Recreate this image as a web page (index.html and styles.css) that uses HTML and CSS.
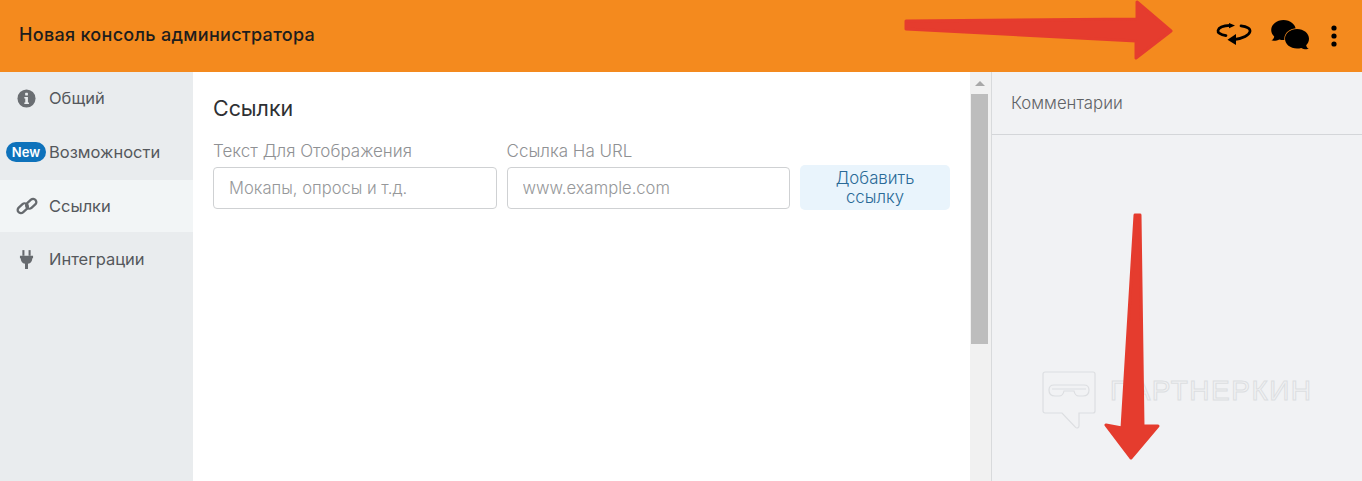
FILE: index.html
```html
<!DOCTYPE html>
<html lang="ru">
<head>
<meta charset="utf-8">
<title>Новая консоль администратора</title>
<link rel="stylesheet" href="styles.css">
</head>
<body>
<div class="app">
  <header class="topbar">
    <h1 class="title">Новая консоль администратора</h1>
    <div class="actions">
      <svg class="ic-sync" viewBox="0 0 36 22" width="36" height="22"><g fill="none" stroke="#000" stroke-width="2.7" stroke-linecap="round"><path d="M10 12.6 C4 11.6 1.5 9.5 2 7.5 C2.8 4.5 8 2.6 14 2.4"/><path d="M25 2.8 C31 3.5 34.6 5.6 34 8.6 C33.4 12 27 15.6 18 16.6"/></g><path d="M13 0 L19 2.6 L13 5.2Z"/><path d="M20 11 L11.5 16.8 L20 22Z"/></svg>
      <svg class="ic-chat" viewBox="0 0 38 30" width="38" height="30"><path d="M12.5 0 C19.3 0 24.8 4.5 24.8 10 C24.8 15.5 19.3 20 12.5 20 C11 20 9.7 19.8 8.4 19.4 C6.4 20.6 3.6 21 .4 20.6 C2 19.4 3 18 3.2 16.4 C1.2 14.6 .2 12.4 .2 10 C.2 4.5 5.7 0 12.5 0Z"/><path class="chat-back" d="M26 9 C32.7 9 38 13.4 38 18.8 C38 21.2 37 23.4 35.2 25.2 C35.4 26.6 36.2 27.8 37.8 29 C34.8 29.4 32 29 30.2 27.9 C28.9 28.3 27.5 28.5 26 28.5 C19.3 28.5 14 24.2 14 18.8 C14 13.4 19.3 9 26 9Z"/></svg>
      <svg class="ic-more" viewBox="0 0 8 22" width="8" height="22"><circle cx="4" cy="3" r="2.6"/><circle cx="4" cy="11" r="2.6"/><circle cx="4" cy="19" r="2.6"/></svg>
    </div>
  </header>
  <div class="body">
    <nav class="sidebar">
      <a class="nav-item">
        <span class="nav-ic"><svg viewBox="0 0 20 20" width="19" height="19"><circle cx="10" cy="10" r="9.5" fill="#6a6e72"/><rect x="8.6" y="4" width="2.9" height="2.9" rx=".6" fill="#e9ecee"/><path d="M7.7 8.3h3.8v6h1.1v1.6H7.7v-1.6h1v-4.3h-1z" fill="#e9ecee"/></svg></span>
        <span>Общий</span>
      </a>
      <a class="nav-item">
        <span class="badge">New</span>
        <span>Возможности</span>
      </a>
      <a class="nav-item active">
        <span class="nav-ic"><svg viewBox="0 0 22 18" width="22" height="18" fill="none" stroke="#666a6e" stroke-width="2.3"><rect x="1" y="8" width="11.5" height="6.4" rx="3.2" transform="rotate(-42 6.8 11.2)"/><rect x="9.5" y="3.6" width="11.5" height="6.4" rx="3.2" transform="rotate(-42 15.2 6.8)"/></svg></span>
        <span>Ссылки</span>
      </a>
      <a class="nav-item">
        <span class="nav-ic"><svg viewBox="0 0 16 20" width="15" height="19" fill="#666a6e"><rect x="3.6" y="0" width="2.2" height="6"/><rect x="10.2" y="0" width="2.2" height="6"/><path d="M1 6h14v2.6h-.8c0 3.2-1.7 5.3-4.6 6V20H6.4v-5.4c-2.9-.7-4.6-2.8-4.6-6H1z"/></svg></span>
        <span>Интеграции</span>
      </a>
    </nav>
    <main class="main">
      <h2 class="heading">Ссылки</h2>
      <div class="form">
        <label class="field">
          <span class="label">Текст Для Отображения</span>
          <input class="input" type="text" placeholder="Мокапы, опросы и т.д.">
        </label>
        <label class="field">
          <span class="label">Ссылка На URL</span>
          <input class="input" type="text" placeholder="www.example.com">
        </label>
        <button class="add" type="button">Добавить ссылку</button>
      </div>
    </main>
    <div class="scrollbar">
      <div class="scroll-up"></div>
      <div class="scroll-thumb"></div>
    </div>
    <aside class="comments">
      <div class="comments-head">Комментарии</div>
    </aside>
  </div>
  <div class="watermark">
    <svg viewBox="0 0 54 58" width="54" height="58" fill="none" stroke="#dcdee1" stroke-width="1.2"><path d="M3 1h48a2 2 0 0 1 2 2v37a2 2 0 0 1-2 2H37v13a2 2 0 0 1-3.4 1.4L20 42H3a2 2 0 0 1-2-2V3a2 2 0 0 1 2-2z"/><path d="M7 19 Q7 14 12 14 H42 Q47 14 47 19 Q47 25 41 25 H37 Q33 25 32 20 H22 Q21 25 17 25 H13 Q7 25 7 19Z"/><path d="M10 18 H44"/></svg>
    <span class="wm-text">ПАРТНЕРКИН</span>
  </div>
  <svg class="arrow arrow-right" viewBox="0 0 272 62" width="272" height="62"><path fill="#e53c2e" stroke="#e53c2e" stroke-width="3" stroke-linejoin="round" d="M3 21 L234 19 L234 2 L268 31 L233 58 L233 41 L3 29 Z"/></svg>
  <svg class="arrow arrow-down" viewBox="0 0 58 250" width="58" height="250"><path fill="#e53c2e" stroke="#e53c2e" stroke-width="3" stroke-linejoin="round" d="M32 3 L37 3 L40 214 L55 214 L28 246 L3 213 L19 216 Z"/></svg>
</div>
</body>
</html>
```
FILE: styles.css
```css
* { box-sizing: border-box; }
html, body { margin: 0; height: 100%; overflow: hidden; }
body { font-family: "Inter", "Noto Sans", sans-serif; color: #3a3d40; background: #fff; }
.app { position: relative; width: 1362px; height: 481px; display: flex; flex-direction: column; overflow: hidden; }

.topbar { flex: 0 0 72px; background: #f48a1e; display: flex; align-items: center; justify-content: space-between; padding: 0 24px 4px 19px; }
.title { margin: 0; font-size: 18px; font-weight: 500; letter-spacing: .3px; color: #1d1d1d; }
.actions { display: flex; align-items: center; gap: 19px; }
.ic-sync { display: block; }
.ic-chat { display: block; margin-top: 2px; }
.ic-chat .chat-back { stroke: #f48a1e; stroke-width: 1.4; paint-order: stroke; }
.ic-more { display: block; margin-top: 4px; margin-left: 2px; }

.body { flex: 1; display: flex; min-height: 0; }
.sidebar { flex: 0 0 193px; background: #e9ecee; }
.nav-item { display: flex; align-items: center; font-size: 16.5px; color: #55585c; }
.nav-item:nth-child(1) { height: 52px; }
.nav-item:nth-child(2) { height: 56px; }
.nav-item:nth-child(3) { height: 52px; background: #f2f5f6; }
.nav-item:nth-child(4) { height: 54px; }
.nav-ic { width: 49px; display: flex; justify-content: center; padding-left: 4px; }
.badge { width: 40px; height: 20px; margin: 0 3px 0 6px; background: #0e72bb; color: #fff; font-size: 13px; font-weight: 600; border-radius: 10px; display: flex; align-items: center; justify-content: center; }

.main { flex: 0 0 777px; background: #fff; padding: 24px 20px 0 20px; }
.heading { margin: 0; font-size: 21.4px; font-weight: 400; line-height: 24px; color: #2e3033; }
.form { display: flex; align-items: flex-end; margin-top: 21px; gap: 10px; }
.field { display: flex; flex-direction: column; flex: 1; min-width: 0; }
.label { font-size: 17px; font-weight: 300; line-height: 20px; color: #8f9194; margin-bottom: 6px; }
.input { width: 100%; height: 42px; border: 1px solid #cfd1d3; border-radius: 4px; padding: 0 15px; font: inherit; font-size: 16.6px; font-weight: 300; color: #3a3d40; background: #fff; outline: none; }
.input::placeholder { color: #96989a; opacity: 1; }
.add { flex: 0 0 150px; height: 45px; border: 0; border-radius: 5px; background: #e9f4fc; color: #2a6a97; font: inherit; font-size: 16.8px; font-weight: 300; line-height: 19px; padding: 2px 20px; margin-bottom: -1px; text-align: center; }

.scrollbar { flex: 0 0 22px; background: #f1f1f1; display: flex; flex-direction: column; align-items: center; border-right: 1px solid #d8dadc; }
.scroll-up { flex: 0 0 22px; width: 100%; position: relative; }
.scroll-up::after { content: ""; position: absolute; left: 5px; top: 9px; border: 5px solid transparent; border-top: 0; border-bottom: 5px solid #a8a8a8; }
.scroll-thumb { width: 17px; margin-right: 3px; height: 250px; background: #bdbdbd; }

.comments { flex: 1; background: #f1f2f4; }
.comments-head { height: 63px; border-bottom: 1px solid #d4d6d9; padding: 0 19px; display: flex; align-items: center; font-size: 16.8px; font-weight: 300; color: #5f6266; }

.watermark { position: absolute; left: 1042px; top: 371px; display: flex; align-items: flex-start; gap: 14px; }
.wm-text { font-family: "Liberation Sans", sans-serif; font-size: 28px; line-height: 40px; letter-spacing: 1.5px; color: transparent; -webkit-text-stroke: 1px #dcdee1; }

.arrow { position: absolute; }
.arrow-right { left: 903px; top: 0; }
.arrow-down { left: 1103px; top: 212px; }
```
